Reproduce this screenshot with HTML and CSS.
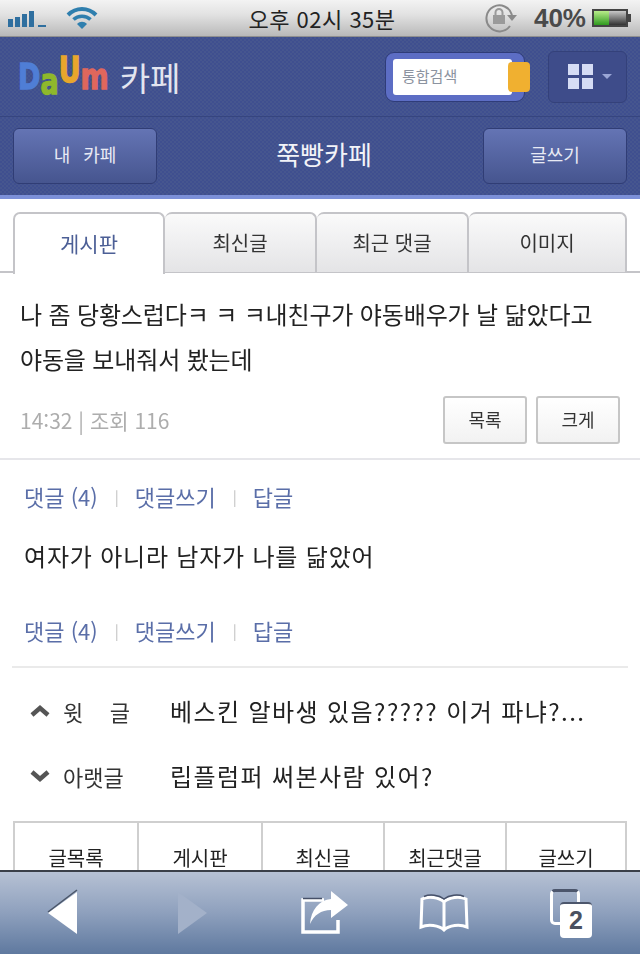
FILE: index.html
```html
<!DOCTYPE html>
<html lang="ko">
<head>
<meta charset="UTF-8">
<title>쭉빵카페</title>
<link rel="stylesheet" href="styles.css">
</head>
<body>
<div class="screen">

    <!-- status bar -->
    <div class="status">
        <div class="status-left">
            <svg class="signal" width="38" height="18" viewBox="0 0 38 18">
                <rect x="0" y="9" width="5" height="8" fill="#2f6f9f"/>
                <rect x="7" y="7" width="5" height="10" fill="#2f6f9f"/>
                <rect x="14" y="4" width="5" height="13" fill="#2f6f9f"/>
                <rect x="21" y="1" width="5" height="16" fill="#2f6f9f"/>
                <rect x="30" y="15" width="8" height="2" fill="#2f6f9f"/>
            </svg>
            <svg class="wifi" width="32" height="24" viewBox="0 0 32 24">
                <path d="M2 9 C10 1 22 1 30 9" fill="none" stroke="#2f7fae" stroke-width="4"/>
                <path d="M7.500 13.500 C12 9 20 9 24.500 13.500" fill="none" stroke="#2f7fae" stroke-width="3.500"/>
                <path d="M11 18 L16 23 L21 18 C18 15 14 15 11 18 Z" fill="#2f7fae"/>
            </svg>
        </div>
        <div class="clock">오후 02시 35분</div>
        <div class="status-right">
            <svg class="rotate-lock" width="34" height="32" viewBox="0 0 34 32">
                <path d="M26 24 A13 13 0 1 1 28 13" fill="none" stroke="#8a8a8a" stroke-width="2"/>
                <path d="M23 13 L33 13 L28 19 Z" fill="#8a8a8a"/>
                <rect x="9" y="13" width="12" height="9" fill="#9a9a9a"/>
                <path d="M11.500 13 V10.500 A3.500 3.500 0 0 1 18.500 10.500 V13" fill="none" stroke="#9a9a9a" stroke-width="2"/>
            </svg>
            <span class="percent">40%</span>
            <svg class="battery" width="40" height="20" viewBox="0 0 40 20">
                <defs>
                    <linearGradient id="battBody" x1="0" x2="0" y1="0" y2="1">
                        <stop offset="0" stop-color="#c8c8c8"/>
                        <stop offset="1" stop-color="#333"/>
                    </linearGradient>
                    <linearGradient id="battFill" x1="0" x2="0" y1="0" y2="1">
                        <stop offset="0" stop-color="#b8ec8a"/>
                        <stop offset="1" stop-color="#2f9a1e"/>
                    </linearGradient>
                </defs>
                <rect x="0" y="1" width="36" height="18" fill="#444"/>
                <rect x="2" y="3" width="32" height="14" fill="url(#battBody)"/>
                <rect x="2" y="3" width="15" height="14" fill="url(#battFill)"/>
                <rect x="36" y="6" width="3" height="8" fill="#444"/>
            </svg>
        </div>
    </div>

    <!-- cafe header -->
    <div class="header">
        <div class="top-row">
            <div class="brand">
                <span class="logo"><span class="l-d">D</span><span class="l-a">a</span><span class="l-u">U</span><span class="l-m">m</span></span>
                <span class="brand-name">카페</span>
            </div>
            <div class="search">
                <div class="search-input">통합검색</div>
                <div class="search-btn"></div>
            </div>
            <div class="grid-btn">
                <div class="grid-icon"><i></i><i></i><i></i><i></i></div>
                <div class="caret"></div>
            </div>
        </div>
        <div class="cafe-row">
            <div class="head-btn">내 카페</div>
            <div class="cafe-name">쭉빵카페</div>
            <div class="head-btn">글쓰기</div>
        </div>
    </div>

    <div class="content">
        <ul class="tabs">
            <li class="tab on">게시판</li>
            <li class="tab">최신글</li>
            <li class="tab">최근 댓글</li>
            <li class="tab last">이미지</li>
        </ul>

        <div class="post">
            <p class="post-title">나 좀 당황스럽다ㅋ ㅋ ㅋ내친구가 야동배우가 날 닮았다고 야동을 보내줘서 봤는데</p>
            <div class="post-meta">
                <span class="meta-text">14:32 | 조회 116</span>
                <span class="post-btns">
                    <span class="small-btn">목록</span>
                    <span class="small-btn">크게</span>
                </span>
            </div>
        </div>

        <div class="comments">
            <div class="links"><a>댓글 (4)</a><b>|</b><a>댓글쓰기</a><b>|</b><a>답글</a></div>
            <p class="comment">여자가 아니라 남자가 나를 닮았어</p>
            <div class="links"><a>댓글 (4)</a><b>|</b><a>댓글쓰기</a><b>|</b><a>답글</a></div>
        </div>

        <div class="around">
            <div class="around-row">
                <svg class="chev" width="22" height="14" viewBox="0 0 22 14"><path d="M3 11 L11 4 L19 11" fill="none" stroke="#555" stroke-width="4.500"/></svg>
                <span class="around-label spread"><span>윗</span><span>글</span></span>
                <span class="around-title">베스킨 알바생 있음????? 이거 파냐?...</span>
            </div>
            <div class="around-row">
                <svg class="chev" width="22" height="14" viewBox="0 0 22 14"><path d="M3 3 L11 10 L19 3" fill="none" stroke="#555" stroke-width="4.500"/></svg>
                <span class="around-label">아랫글</span>
                <span class="around-title">립플럼퍼 써본사람 있어?</span>
            </div>
        </div>

        <div class="bottom-menu">
            <div class="menu-cell">글목록</div>
            <div class="menu-cell">게시판</div>
            <div class="menu-cell">최신글</div>
            <div class="menu-cell">최근댓글</div>
            <div class="menu-cell">글쓰기</div>
        </div>
    </div>

    <!-- safari toolbar -->
    <div class="toolbar">
        <svg class="tb-back" width="36" height="48" viewBox="0 0 36 48">
            <path d="M31 3 L2 24 L31 45 Z" fill="#fff"/>
            <path d="M31 1 L2 23" stroke="#4a5568" stroke-width="1.500"/>
        </svg>
        <svg class="tb-forward" width="36" height="48" viewBox="0 0 36 48">
            <path d="M3 3 L32 24 L3 45 Z" fill="#a3b1c9"/>
        </svg>
        <svg class="tb-share" width="50" height="46" viewBox="0 0 50 46">
            <path d="M24 10 H3 V42 H38 V30" fill="none" stroke="#fff" stroke-width="3.500"/>
            <path d="M3 8.500 H22" stroke="#465068" stroke-width="1.500"/>
            <path d="M31 1 L48 15 L31 28 V20 C21 20 14 25 10 34 C11 20 19 10 31 9 Z" fill="#fff"/>
        </svg>
        <svg class="tb-book" width="50" height="38" viewBox="0 0 50 38">
            <path d="M25 8 C20 3 9 2 3 5 L2 33 C9 30 20 31 25 36 C30 31 41 30 48 33 L47 5 C41 2 30 3 25 8 Z M25 8 V36" fill="none" stroke="#fff" stroke-width="3"/>
            <path d="M5 2.500 C11 0 20 1 25 5 C30 1 39 0 45 2.500" fill="none" stroke="#465068" stroke-width="1.500"/>
        </svg>
        <div class="pages">
            <div class="pages-back"></div>
            <div class="pages-front">2</div>
        </div>
    </div>
</div>
</body>
</html>
```

FILE: styles.css
```css
@charset "utf-8";

body, div, ul, li, p { padding: 0; margin: 0; }
ul { list-style: none; }

body {
    width: 640px;
    height: 954px;
    overflow: hidden;
    background: #fff;
    font-family: "Noto Sans CJK KR", "Noto Sans", sans-serif;
    color: #222;
}

/* the reference is a soft, upscaled photo of a phone */
.screen {
    display: flex;
    flex-direction: column;
    height: 954px;
    filter: blur(0.5px);
}

/* status bar */
.status {
    flex: none;
    height: 37px;
    display: flex;
    align-items: center;
    justify-content: space-between;
    padding: 0 8px;
    background: linear-gradient(#f3f3f3, #e2e2e2 40%, #b9b9b9);
    border-bottom: 1px solid #8f8f8f;
    box-sizing: border-box;
}

.status-left, .status-right {
    display: flex;
    align-items: center;
}

.status-left { gap: 20px; width: 160px; }
.status-left .signal { margin-top: 1px; }

.clock {
    font-size: 22px;
    line-height: 37px;
    color: #222;
    letter-spacing: 0.5px;
    margin-left: 4px;
}

.status-right {
    width: 160px;
    justify-content: flex-end;
}

.rotate-lock { margin-right: 16px; }

.percent {
    font-family: "Liberation Sans", sans-serif;
    font-size: 26px;
    font-weight: bold;
    color: #4a4a4a;
    margin-right: 6px;
}

/* header */
.header {
    flex: none;
    height: 162px;
    background-color: #3f4f8f;
    background-image: conic-gradient(#46568f 25%, #3f4f8f 0 50%, #46568f 0 75%, #3f4f8f 0);
    background-size: 4px 4px;
    border-bottom: 4px solid #7c90d8;
    box-sizing: border-box;
}

.top-row {
    height: 80px;
    display: flex;
    align-items: center;
    padding: 0 13px 0 18px;
    border-bottom: 1px solid #36457f;
    box-sizing: border-box;
}

.brand {
    flex: 1;
    display: flex;
    align-items: center;
    gap: 11px;
}

.logo {
    display: flex;
    font-family: "DejaVu Sans", sans-serif;
    font-size: 27px;
    font-weight: bold;
    line-height: 40px;
    -webkit-text-stroke: 1px;
    transform: scaleY(1.3);
}

.l-d { color: #4f7ed6; }
.l-a { color: #8fb82c; transform: translateY(4px); }
.l-u { color: #e8a62c; transform: translateY(-5px); }
.l-m { color: #e0675c; }

.brand-name {
    font-size: 33px;
    line-height: 40px;
    color: #e3e5f0;
}

.search {
    width: 140px;
    height: 50px;
    box-sizing: border-box;
    padding: 6px 12px 6px 7px;
    margin-right: 23px;
    background: #5c6dc4;
    border: 1px solid #2f3c78;
    border-radius: 9px;
    position: relative;
}

.search-input {
    height: 36px;
    background: #fff;
    border-radius: 3px;
    padding-left: 9px;
    font-size: 15px;
    line-height: 34px;
    color: #8c93a0;
}

.search-btn {
    position: absolute;
    right: -6px;
    top: 9px;
    width: 22px;
    height: 30px;
    background: #f0b030;
    border-radius: 4px;
}

.grid-btn {
    width: 79px;
    height: 52px;
    box-sizing: border-box;
    display: flex;
    align-items: center;
    justify-content: center;
    gap: 9px;
    padding-left: 4px;
    background: #3e4c8a;
    border: 1px solid #34417a;
    border-radius: 6px;
}

.grid-icon {
    display: grid;
    grid-template-columns: 11px 11px;
    grid-auto-rows: 11px;
    gap: 3px;
}

.grid-icon i { background: #d5dcf5; }

.caret {
    width: 0;
    height: 0;
    border-left: 5px solid transparent;
    border-right: 5px solid transparent;
    border-top: 5px solid #9aa6d6;
}

.cafe-row {
    height: 78px;
    display: flex;
    align-items: center;
    justify-content: space-between;
    padding: 0 13px;
}

.head-btn {
    width: 144px;
    height: 56px;
    box-sizing: border-box;
    background: linear-gradient(#6474b4, #46558f);
    border: 1px solid #303d75;
    border-radius: 6px;
    font-size: 18px;
    line-height: 50px;
    word-spacing: 8px;
    text-align: center;
    color: #e8eaf4;
}

.cafe-name {
    font-size: 26px;
    line-height: 40px;
    color: #f2f3f8;
    margin: 0 0 4px 8px;
}

/* content */
.content {
    flex: 1;
    min-height: 0;
    overflow: hidden;
}

.tabs {
    display: flex;
    height: 74px;
    box-sizing: border-box;
    padding: 13px 13px 0;
    border-bottom: 2px solid #c4c4c8;
}

.tab {
    width: 152px;
    height: 60px;
    box-sizing: border-box;
    border: 2px solid #c4c4c8;
    border-bottom: 0;
    border-left: 0;
    border-radius: 7px 7px 0 0;
    background: linear-gradient(#fafafa, #e4e4e6);
    font-size: 20px;
    line-height: 58px;
    text-align: center;
    color: #333;
}

.tab.on {
    height: 62px;
    border-left: 2px solid #c4c4c8;
    background: #fff;
    font-size: 21px;
    color: #4c5f96;
}

.tab.last { width: 158px; }

.post {
    height: 187px;
    box-sizing: border-box;
    padding: 18px 20px 0;
    border-bottom: 2px solid #e6e6ea;
}

.post-title {
    font-size: 24px;
    line-height: 45px;
    letter-spacing: -0.15px;
    color: #222;
}

.post-meta {
    display: flex;
    align-items: center;
    justify-content: space-between;
    height: 48px;
    margin-top: 15px;
}

.meta-text {
    font-size: 21px;
    color: #adadad;
}

.post-btns {
    display: flex;
    gap: 9px;
}

.small-btn {
    width: 84px;
    height: 48px;
    box-sizing: border-box;
    background: linear-gradient(#fff, #f2f2f2);
    border: 2px solid #c6c6c6;
    border-radius: 3px;
    font-size: 18px;
    line-height: 43px;
    text-align: center;
    color: #333;
}

.comments {
    height: 208px;
    box-sizing: border-box;
    margin: 0 12px;
    padding: 18px 12px 0;
    border-bottom: 2px solid #eaeaea;
}

.links {
    height: 36px;
    display: flex;
    align-items: center;
    font-size: 22px;
    color: #5a6ea8;
}

.links b {
    font-weight: normal;
    font-size: 15px;
    color: #c0c0c0;
    margin: 0 16px 0 17px;
}

.comment {
    height: 98px;
    padding-top: 24px;
    box-sizing: border-box;
    font-size: 24px;
    line-height: 36px;
    letter-spacing: 0.8px;
    color: #222;
}

.around {
    padding: 10px 0 0 29px;
}

.around-row {
    height: 65px;
    display: flex;
    align-items: center;
}

.around-row .chev { margin-right: 12px; }

.around-label {
    width: 67px;
    margin-right: 40px;
    font-size: 22px;
    color: #333;
}

.around-label.spread {
    display: flex;
    justify-content: space-between;
}

.around-title {
    font-size: 24px;
    letter-spacing: 1.4px;
    color: #222;
    white-space: nowrap;
}

.bottom-menu {
    display: grid;
    grid-template-columns: 122px 124px 122px 122px 1fr;
    margin: 13px 13px 0;
    height: 76px;
    box-sizing: border-box;
    border: 2px solid #cfcfcf;
}

.menu-cell {
    border-left: 2px solid #cfcfcf;
    padding-top: 23px;
    font-size: 20px;
    line-height: 23px;
    text-align: center;
    color: #222;
}

.menu-cell:first-child { border-left: 0; }

/* safari toolbar */
.toolbar {
    flex: none;
    height: 84px;
    box-sizing: border-box;
    display: flex;
    align-items: center;
    padding-left: 46px;
    background: linear-gradient(#b6c1d4, #8ea0bd 50%, #5f799f);
    border-top: 2px solid #3a3f48;
}

.tb-forward { margin-left: 93px; }
.tb-share { margin-left: 89px; }
.tb-book { margin-left: 69px; }

.pages {
    width: 42px;
    height: 48px;
    margin-left: 81px;
    position: relative;
}

.pages-back {
    position: absolute;
    left: 0;
    top: 0;
    width: 30px;
    height: 36px;
    box-sizing: border-box;
    border: 3px solid #fff;
    border-top-color: #4c566c;
    border-radius: 5px;
}

.pages-front {
    position: absolute;
    right: 0;
    top: 13px;
    width: 32px;
    height: 34px;
    background: #fff;
    border-top: 2px solid #4c566c;
    border-radius: 4px;
    font-family: "Liberation Sans", sans-serif;
    font-size: 25px;
    font-weight: bold;
    line-height: 32px;
    text-align: center;
    color: #4a5160;
}
```
